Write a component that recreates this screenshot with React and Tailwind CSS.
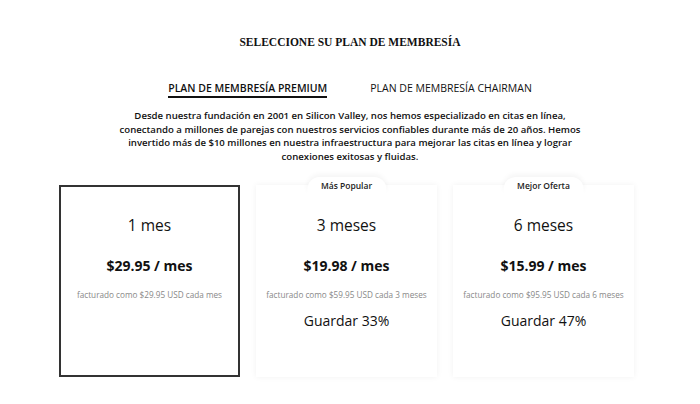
import React from "react";

const plans = [
  { months: "1 mes", price: "$29.95 / mes", billed: "facturado como $29.95 USD cada mes", save: null, badge: null, selected: true },
  { months: "3 meses", price: "$19.98 / mes", billed: "facturado como $59.95 USD cada 3 meses", save: "Guardar 33%", badge: "Más Popular" },
  { months: "6 meses", price: "$15.99 / mes", billed: "facturado como $95.95 USD cada 6 meses", save: "Guardar 47%", badge: "Mejor Oferta" },
];

function Card({ p }) {
  return (
    <div
      className={
        "relative w-[181px] h-[192px] flex flex-col items-center bg-white " +
        (p.selected
          ? "border-2 border-[#333]"
          : "shadow-[0_0_6px_rgba(0,0,0,0.06)]")
      }
    >
      {p.badge && (
        <div className="absolute top-[-8px] left-1/2 -translate-x-1/2 px-[14px] pt-[5px] pb-[4px] bg-white rounded-t-[12px] shadow-[0_-3px_5px_rgba(0,0,0,0.04)] text-[8.5px] font-semibold text-[#222] leading-none whitespace-nowrap">
          {p.badge}
        </div>
      )}
      <div className={"text-[15.5px] text-[#111] leading-none " + (p.selected ? "mt-[31px]" : "mt-[33px]")}>{p.months}</div>
      <div className="mt-[26px] text-[14px] font-bold text-[#111] leading-none">{p.price}</div>
      <div className="mt-[18px] text-[8.2px] text-[#888] leading-none whitespace-nowrap">{p.billed}</div>
      {p.save && <div className="mt-[14px] text-[14px] text-[#111] leading-none">{p.save}</div>}
    </div>
  );
}

export default function App() {
  return (
    <div className="w-[700px] h-[404px] bg-white flex flex-col items-center font-['Open_Sans',sans-serif]">
      <h1 className="mt-[37px] font-['Liberation_Serif',serif] font-bold text-[11.5px] text-[#111] leading-none">
        SELECCIONE SU PLAN DE MEMBRESÍA
      </h1>
      <div className="mt-[34px] flex gap-[43px] text-[10.5px] leading-none text-[#111]">
        <div className="font-semibold border-b-2 border-[#111] pb-[3px]">PLAN DE MEMBRESÍA PREMIUM</div>
        <div>PLAN DE MEMBRESÍA CHAIRMAN</div>
      </div>
      <p className="mt-[11px] w-[462px] text-center text-[9.6px] font-semibold leading-[13.7px] text-[#111]">
        Desde nuestra fundación en 2001 en Silicon Valley, nos hemos especializado en citas en línea, conectando a millones de parejas con nuestros servicios confiables durante más de 20 años. Hemos invertido más de $10 millones en nuestra infraestructura para mejorar las citas en línea y lograr conexiones exitosas y fluidas.
      </p>
      <div className="mt-[21px] flex gap-[16px] self-start ml-[59px]">
        {plans.map((p, i) => (
          <Card key={i} p={p} />
        ))}
      </div>
    </div>
  );
}
